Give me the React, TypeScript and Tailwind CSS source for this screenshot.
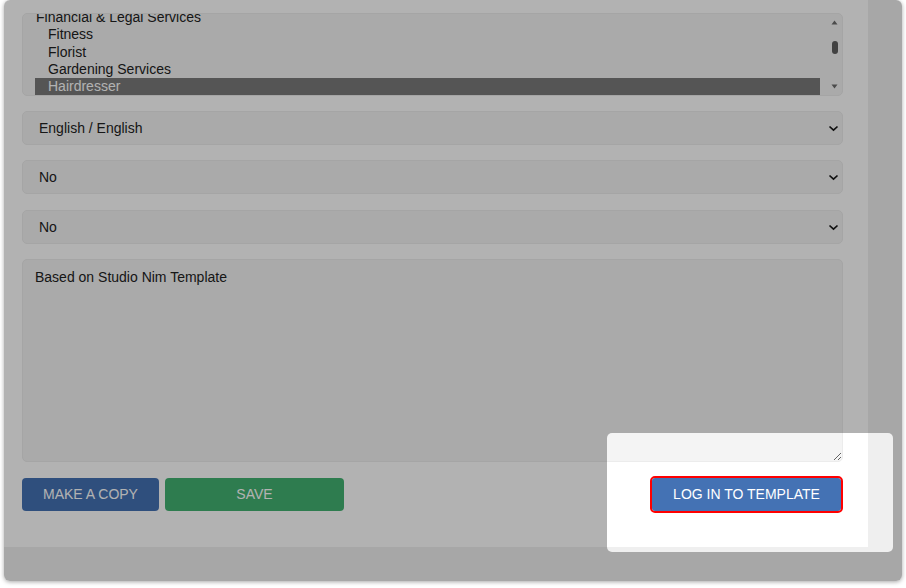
import { useState } from "react";

const categories = [
  { label: "Financial & Legal Services", sub: false },
  { label: "Fitness", sub: true },
  { label: "Florist", sub: true },
  { label: "Gardening Services", sub: true },
  { label: "Hairdresser", sub: true },
];

const Chevron = () => (
  <svg width="11" height="7" viewBox="0 0 11 7" className="shrink-0">
    <path d="M1.5 1.5 L5.5 5.2 L9.5 1.5" fill="none" stroke="#161616" strokeWidth="1.7" />
  </svg>
);

const SelectBox = ({ value, className }: { value: string; className?: string }) => (
  <div
    className={`flex h-[34px] items-center justify-between rounded-[5px] border border-[#ececec] bg-[#f4f4f4] pl-[16px] pr-[3px] text-[14px] text-[#222] ${className ?? ""}`}
  >
    <span>{value}</span>
    <Chevron />
  </div>
);

export default function App() {
  const [selected] = useState("Hairdresser");

  return (
    <div className="min-h-screen bg-white font-['Liberation_Sans',Arial,sans-serif]">
      {/* card */}
      <div className="relative ml-[4px] flex h-[581px] w-[898px] flex-col overflow-hidden rounded-[6px] bg-[#efefef] shadow-[0_1px_4px_rgba(0,0,0,0.35)]">
        <div className="flex h-[547px] shrink-0">
          {/* main form */}
          <div className="w-[864px] bg-white pl-[18px] pr-[25px] pt-[13px]">
            {/* category listbox */}
            <div className="relative flex h-[83px] overflow-hidden rounded-[5px] border border-[#ececec] bg-[#f4f4f4] text-[14px] leading-[17.3px] text-[#222]">
              <div className="mt-[-5px] flex-1 pl-[12px] pr-[8px]">
                {categories.map((c) => (
                  <div
                    key={c.label}
                    className={`h-[17.3px] whitespace-nowrap ${c.sub ? "pl-[13px]" : "pl-[1px]"} ${
                      c.label === selected ? "bg-[#7a7a7a] text-white" : ""
                    }`}
                  >
                    {c.label}
                  </div>
                ))}
              </div>
              {/* scrollbar */}
              <div className="mr-[1px] flex w-[13px] shrink-0 flex-col items-center justify-between py-[6px]">
                <svg width="7" height="5" viewBox="0 0 7 5">
                  <path d="M3.5 0.5 L6.5 4.5 L0.5 4.5 Z" fill="#6c6c6c" />
                </svg>
                <div className="mb-auto mt-[16px] h-[13px] w-[6px] rounded-full bg-[#5f5f5f]" />
                <svg width="7" height="5" viewBox="0 0 7 5">
                  <path d="M0.5 0.5 L6.5 0.5 L3.5 4.5 Z" fill="#6c6c6c" />
                </svg>
              </div>
            </div>

            <SelectBox value="English / English" className="mt-[15px]" />
            <SelectBox value="No" className="mt-[15px]" />
            <SelectBox value="No" className="mt-[16px]" />

            <textarea
              readOnly
              defaultValue="Based on Studio Nim Template"
              className="mt-[15px] block h-[203px] w-full rounded-[5px] border border-[#ececec] bg-[#f4f4f4] px-[12px] pt-[9px] text-[14px] leading-[16px] text-[#222] outline-none"
            />

            <div className="mt-[16px] flex items-center text-[14px] text-white">
              <button className="h-[33px] w-[137px] rounded-[4px] bg-[#4472b4] uppercase">Make a copy</button>
              <button className="ml-[6px] h-[33px] w-[179px] rounded-[4px] bg-[#43b271] uppercase">Save</button>
              <button className="ml-auto mr-[2px] h-[33px] w-[189px] rounded-[3px] bg-[#4472b4] uppercase outline-2 outline-[#ff0000] outline-solid">
                Log in to template
              </button>
            </div>
          </div>
          {/* right strip */}
          <div className="flex-1 bg-[#efefef]" />
        </div>
        {/* bottom strip */}
        <div className="flex-1 bg-[#efefef]" />

        {/* tour spotlight */}
        <div className="pointer-events-none absolute left-[603px] top-[433px] h-[119px] w-[286px] rounded-[5px] shadow-[0_0_0_2000px_rgba(0,0,0,0.3)]" />
      </div>
    </div>
  );
}
